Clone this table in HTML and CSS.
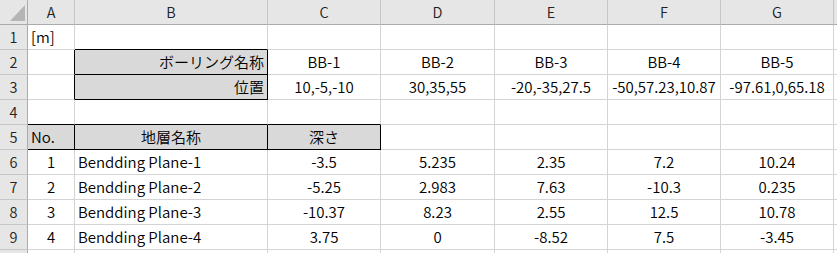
FILE: index.html
```html
<!DOCTYPE html>
<html lang="ja">
<head>
<meta charset="utf-8">
<title>Sheet</title>
<link rel="stylesheet" href="styles.css">
</head>
<body>
<div class="sheet">
  <div class="c hd corner"><svg class="tri" width="28" height="25" viewBox="0 0 28 25"><polygon points="25,5 25,21 10,21" fill="#b5b5b5"/></svg></div>
  <div class="c hd">A</div><div class="c hd">B</div><div class="c hd">C</div><div class="c hd">D</div><div class="c hd">E</div><div class="c hd">F</div><div class="c hd">G</div><div class="c hd"></div>

  <div class="c rh">1</div>
  <div class="c l">[m]</div><div class="c bb"></div><div class="c"></div><div class="c"></div><div class="c"></div><div class="c"></div><div class="c"></div><div class="c"></div>

  <div class="c rh">2</div>
  <div class="c br"></div><div class="c fill r bb br">ボーリング名称</div><div class="c m">BB-1</div><div class="c m">BB-2</div><div class="c m">BB-3</div><div class="c m">BB-4</div><div class="c m">BB-5</div><div class="c"></div>

  <div class="c rh">3</div>
  <div class="c br"></div><div class="c fill r bb br">位置</div><div class="c m">10,-5,-10</div><div class="c m">30,35,55</div><div class="c m">-20,-35,27.5</div><div class="c m">-50,57.23,10.87</div><div class="c m">-97.61,0,65.18</div><div class="c"></div>

  <div class="c rh">4</div>
  <div class="c bb"></div><div class="c bb"></div><div class="c bb"></div><div class="c"></div><div class="c"></div><div class="c"></div><div class="c"></div><div class="c"></div>

  <div class="c rh">5</div>
  <div class="c fill l bb br">No.</div><div class="c fill m bb br">地層名称</div><div class="c fill m bb br">深さ</div><div class="c"></div><div class="c"></div><div class="c"></div><div class="c"></div><div class="c"></div>

  <div class="c rh">6</div>
  <div class="c m">1</div><div class="c l">Bendding Plane-1</div><div class="c m">-3.5</div><div class="c m">5.235</div><div class="c m">2.35</div><div class="c m">7.2</div><div class="c m">10.24</div><div class="c"></div>

  <div class="c rh">7</div>
  <div class="c m">2</div><div class="c l">Bendding Plane-2</div><div class="c m">-5.25</div><div class="c m">2.983</div><div class="c m">7.63</div><div class="c m">-10.3</div><div class="c m">0.235</div><div class="c"></div>

  <div class="c rh">8</div>
  <div class="c m">3</div><div class="c l">Bendding Plane-3</div><div class="c m">-10.37</div><div class="c m">8.23</div><div class="c m">2.55</div><div class="c m">12.5</div><div class="c m">10.78</div><div class="c"></div>

  <div class="c rh">9</div>
  <div class="c m">4</div><div class="c l">Bendding Plane-4</div><div class="c m">3.75</div><div class="c m">0</div><div class="c m">-8.52</div><div class="c m">7.5</div><div class="c m">-3.45</div><div class="c"></div>

  <div class="c rh"></div>
  <div class="c"></div><div class="c"></div><div class="c"></div><div class="c"></div><div class="c"></div><div class="c"></div><div class="c"></div><div class="c"></div>
</div>
</body>
</html>
```

FILE: styles.css
```css
html, body {
  margin: 0;
  padding: 0;
  background: #ffffff;
  overflow: hidden;
}

.sheet {
  display: grid;
  grid-template-columns: 28px 47px 193px 113px 114px 113px 113px 113px 1fr;
  grid-auto-rows: 25px;
  width: 837px;
  font-family: "Noto Sans CJK JP", "Noto Sans", sans-serif;
  font-size: 15px;
  font-weight: 350;
  color: #000;
}

.c {
  box-sizing: border-box;
  border-right: 1px solid #d4d4d4;
  border-bottom: 1px solid #d4d4d4;
  line-height: 24px;
  padding: 0 3px;
  white-space: nowrap;
  overflow: hidden;
}

.hd {
  background: #e6e6e6;
  border-right-color: #c6c6c6;
  border-bottom-color: #ababab;
  text-align: center;
  font-size: 14.5px;
  color: #222;
}

.corner {
  position: relative;
  padding: 0;
  border-right-color: #ababab;
}

.tri {
  position: absolute;
  left: 0;
  top: 0;
}

.rh {
  background: #e6e6e6;
  border-right-color: #ababab;
  border-bottom-color: #c6c6c6;
  text-align: center;
  font-size: 14.5px;
  color: #222;
  padding: 0;
}

.l { text-align: left; }
.r { text-align: right; }
.m { text-align: center; }

.fill { background: #d9d9d9; }
.bb { border-bottom-color: #000; }
.br { border-right-color: #000; }
```
